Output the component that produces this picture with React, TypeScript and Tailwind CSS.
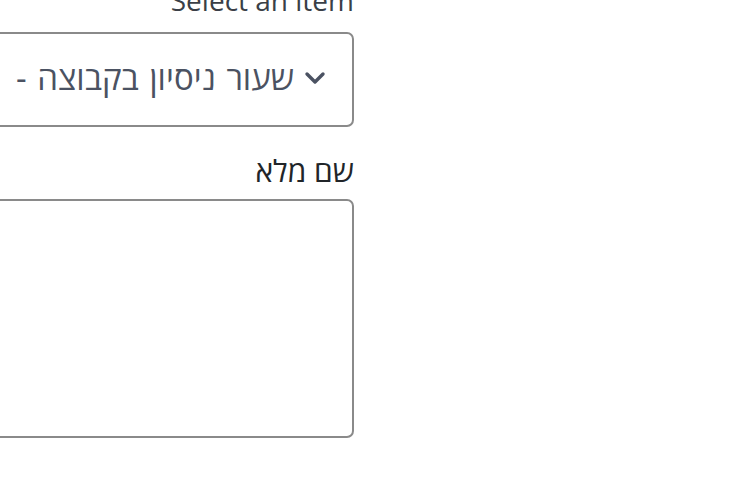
import React from 'react';

// Booking form fragment (RTL), cropped on the left edge
export default function App() {
    return (
        <div className="w-[750px] h-[500px] overflow-hidden bg-white" style={{ fontFamily: '"Open Sans", "DejaVu Sans", sans-serif' }}>
            <div dir="rtl" className="-ml-[80px] w-[434px] -mt-[19px] flex flex-col">
                {/* Select field */}
                <label className="text-[28px] leading-[38px] text-[#3a3f47]">Select an item</label>
                <div className="mt-[13px] h-[95px] flex items-center gap-[10px] rounded-[7px] border-2 border-[#8a8a8a] pr-[26px] pb-[3px]">
                    <svg width="22" height="14" viewBox="0 0 22 14" className="shrink-0">
                        <path d="M3 3 L11 11 L19 3" fill="none" stroke="#4b5262" strokeWidth="3.4" strokeLinecap="round" strokeLinejoin="round" />
                    </svg>
                    <span className="text-[33px] text-[#4b5262] whitespace-nowrap [word-spacing:2px]">שעור ניסיון בקבוצה - </span>
                </div>

                {/* Full name */}
                <label className="mt-[24px] text-[30px] leading-[40px] text-[#212529]">שם מלא</label>
                <textarea className="mt-[8px] h-[239px] resize-none rounded-[7px] border-2 border-[#8a8a8a] outline-none" />
            </div>
        </div>
    );
}
